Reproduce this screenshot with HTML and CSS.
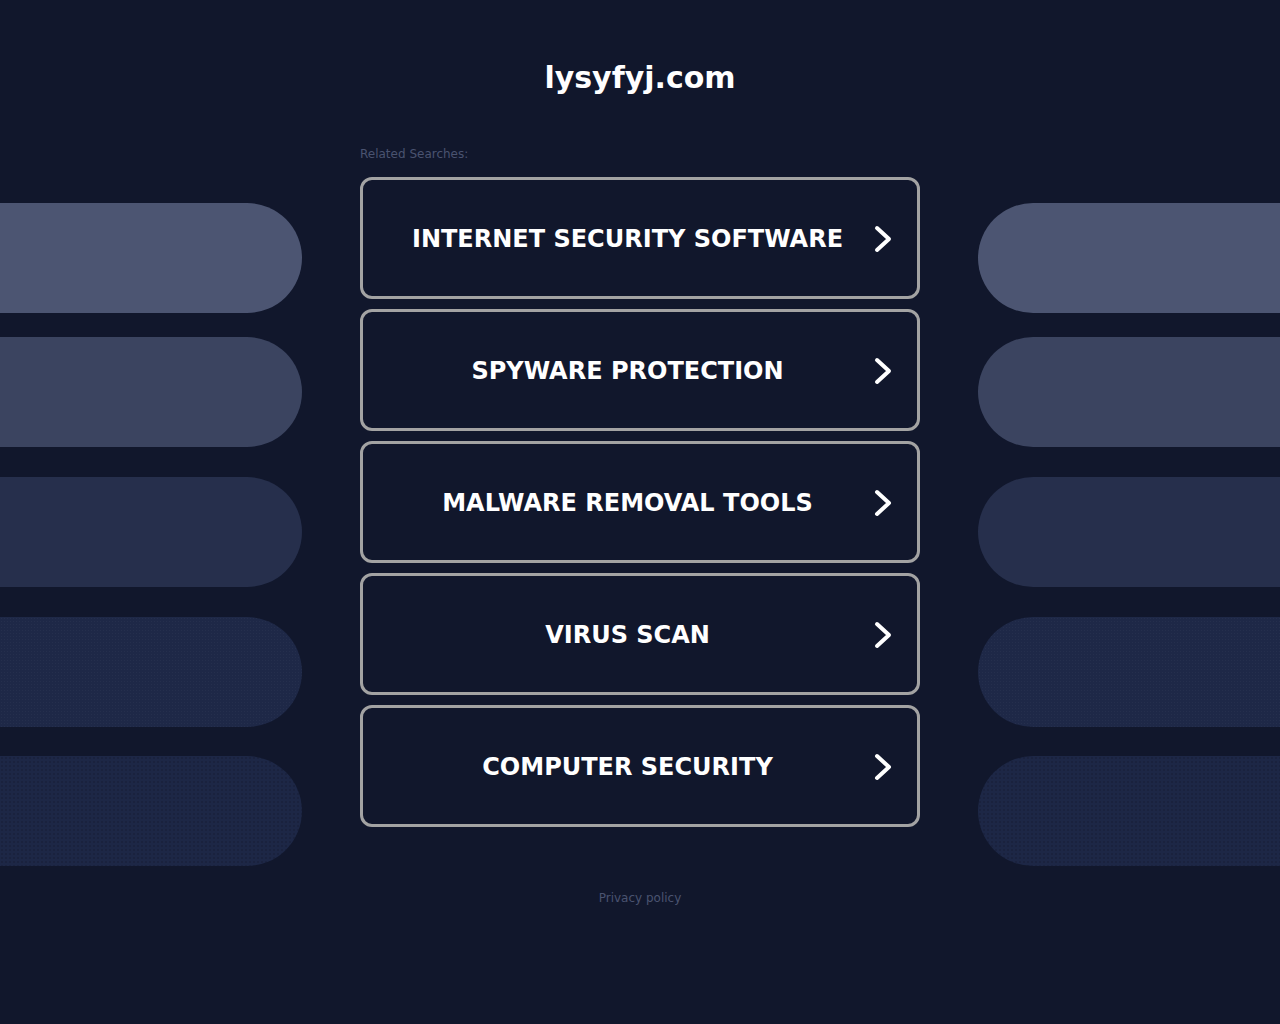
FILE: index.html
```html
<!DOCTYPE html>
<html>
<head>
    <meta charset="utf-8" />
    <title>lysyfyj.com</title>
    <link rel="stylesheet" href="styles.css">
</head>
<body>
    <header class="top">
        <h1 class="domain">lysyfyj.com</h1>
    </header>
    <div class="stage">
        <aside class="pills pills-left">
            <div class="pill pill-1"></div>
            <div class="pill pill-2"></div>
            <div class="pill pill-3"></div>
            <div class="pill pill-4"></div>
            <div class="pill pill-5"></div>
        </aside>
        <main class="links">
            <div class="links-title">Related Searches:</div>
            <a class="link-box" href="#">
                <span class="link-text">INTERNET SECURITY SOFTWARE</span>
                <svg class="arrow" viewBox="0 0 18 28"><path d="M3 3 L15 14 L3 25" /></svg>
            </a>
            <a class="link-box" href="#">
                <span class="link-text">SPYWARE PROTECTION</span>
                <svg class="arrow" viewBox="0 0 18 28"><path d="M3 3 L15 14 L3 25" /></svg>
            </a>
            <a class="link-box" href="#">
                <span class="link-text">MALWARE REMOVAL TOOLS</span>
                <svg class="arrow" viewBox="0 0 18 28"><path d="M3 3 L15 14 L3 25" /></svg>
            </a>
            <a class="link-box" href="#">
                <span class="link-text">VIRUS SCAN</span>
                <svg class="arrow" viewBox="0 0 18 28"><path d="M3 3 L15 14 L3 25" /></svg>
            </a>
            <a class="link-box" href="#">
                <span class="link-text">COMPUTER SECURITY</span>
                <svg class="arrow" viewBox="0 0 18 28"><path d="M3 3 L15 14 L3 25" /></svg>
            </a>
        </main>
        <aside class="pills pills-right">
            <div class="pill pill-1"></div>
            <div class="pill pill-2"></div>
            <div class="pill pill-3"></div>
            <div class="pill pill-4"></div>
            <div class="pill pill-5"></div>
        </aside>
    </div>
    <footer class="bottom">
        <a class="privacy" href="#">Privacy policy</a>
    </footer>
</body>
</html>
```

FILE: styles.css
```css
html, body {
	margin: 0;
	padding: 0;
	background-color: #11172c;
	font-family: "DejaVu Sans", Verdana, sans-serif;
	height: 100%;
}
.top {
	padding-top: 55px;
	text-align: center;
}
.domain {
	margin: 0;
	font-size: 30px;
	line-height: 46px;
	font-weight: bold;
	color: #ffffff;
}
.stage {
	display: flex;
	justify-content: space-between;
	margin-top: 43px;
}
.pills {
	width: 302px;
	padding-top: 59px;
	display: flex;
	flex-direction: column;
}
.pill {
	height: 110px;
}
.pills-left .pill {
	border-radius: 0 55px 55px 0;
}
.pills-right .pill {
	border-radius: 55px 0 0 55px;
}
.pill-1 {
	background-color: #4c5572;
}
.pill-2 {
	margin-top: 24px;
	background-color: #3b4460;
}
.pill-3 {
	margin-top: 30px;
	background-color: #262f4c;
}
.pill-4 {
	margin-top: 30px;
	background-color: #1e2847;
	background-image: radial-gradient(circle, rgba(255,255,255,0.03) 0.6px, transparent 0.8px);
	background-size: 3px 3px;
}
.pill-5 {
	margin-top: 29px;
	background-color: #1d2746;
	background-image: radial-gradient(circle, rgba(0,0,0,0.12) 0.7px, transparent 1px);
	background-size: 4px 4px;
}
.links {
	width: 560px;
}
.links-title {
	font-size: 12px;
	line-height: 18px;
	padding-top: 1px;
	color: #4a5370;
	margin-bottom: 14px;
}
.link-box {
	display: flex;
	align-items: center;
	box-sizing: border-box;
	height: 122px;
	margin-bottom: 10px;
	padding: 2px 25px 0 28px;
	border: 3px solid #a3a3a3;
	border-radius: 12px;
	text-decoration: none;
}
.link-text {
	flex: 1;
	text-align: center;
	font-size: 24px;
	font-weight: bold;
	letter-spacing: 0;
	color: #ffffff;
	margin-right: 10px;
}
.arrow {
	width: 18px;
	height: 28px;
	fill: none;
	stroke: #ffffff;
	stroke-width: 4;
	stroke-linecap: round;
	stroke-linejoin: round;
}
.bottom {
	text-align: center;
	margin-top: 21px;
}
.privacy {
	font-size: 12px;
	color: #4a5370;
	text-decoration: none;
}
```
